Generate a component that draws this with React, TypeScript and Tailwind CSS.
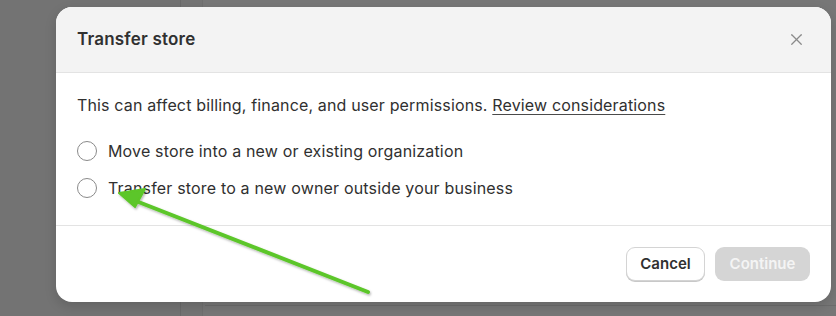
import { X } from 'lucide-react';

const options = [
  'Move store into a new or existing organization',
  'Transfer store to a new owner outside your business',
];

function Radio() {
  return <span className="w-5 h-5 rounded-full border border-[#8a8a8a] bg-white shrink-0" />;
}

export default function App() {
  return (
    <div
      className="relative w-[836px] h-[316px] overflow-hidden bg-[#747474]"
      style={{ fontFamily: 'Inter, "Noto Sans", sans-serif' }}
    >
      {/* dimmed page behind */}
      <div className="absolute inset-0 flex">
        <div className="w-[180px] h-full bg-[#737373]" />
        <div className="w-px h-full bg-[#6a6a6a]" />
        <div className="flex-1 h-full bg-[#777777] border-l border-[#6f6f6f] ml-[21px]" />
      </div>
      <div className="absolute left-[205px] right-0 top-[305px] h-px bg-[#6c6c6c]" />

      {/* modal */}
      <div className="absolute left-[56px] top-[7px] w-[775px] h-[295px] bg-white rounded-[16px] overflow-hidden flex flex-col shadow-[0_4px_12px_rgba(0,0,0,0.15)]">
        <div className="h-[66px] shrink-0 bg-[#f3f3f3] border-b border-[#e3e3e3] flex items-center justify-between pl-[21px] pr-[25px]">
          <h2 className="text-[17px] font-semibold text-[#303030] tracking-[0.2px]">Transfer store</h2>
          <X className="w-[19px] h-[19px] text-[#8a8a8a]" strokeWidth={1.6} />
        </div>

        <div className="flex-1 px-[21px] pt-[21px] border-b border-[#e3e3e3]">
          <p className="text-[16px] leading-[22px] text-[#303030] tracking-[0.15px]">
            This can affect billing, finance, and user permissions.{' '}
            <span className="underline underline-offset-[3px] decoration-[#4a4a4a]">Review considerations</span>
          </p>
          <div className="mt-[24px] flex flex-col gap-[15px]">
            {options.map((label) => (
              <label key={label} className="flex items-center gap-[11px] h-[22px]">
                <Radio />
                <span className="text-[16px] text-[#303030] tracking-[0.17px]">{label}</span>
              </label>
            ))}
          </div>
        </div>

        <div className="h-[76px] shrink-0 flex items-center justify-end gap-[10px] pr-[21px]">
          <button className="h-[34px] w-[79px] rounded-[9px] bg-white border border-[#d4d4d4] shadow-[0_1px_0_#c8c8c8] text-[15px] font-semibold text-[#303030]">
            Cancel
          </button>
          <button className="h-[34px] w-[95px] rounded-[9px] bg-[#d5d5d5] text-[15px] font-semibold text-[#f4f4f4]">
            Continue
          </button>
        </div>
      </div>

      {/* annotation arrow */}
      <svg className="absolute inset-0 pointer-events-none" width="836" height="316" viewBox="0 0 836 316">
        <defs>
          <filter id="sh" x="-10%" y="-10%" width="120%" height="120%">
            <feDropShadow dx="1" dy="1.5" stdDeviation="1.2" floodColor="#000" floodOpacity="0.3" />
          </filter>
        </defs>
        <g filter="url(#sh)" fill="#5cc629" stroke="#5cc629">
          <line x1="368" y1="292" x2="136" y2="201" strokeWidth="4" strokeLinecap="round" />
          <polygon points="119,193 145,189 135,207" strokeWidth="2" strokeLinejoin="round" />
        </g>
      </svg>
    </div>
  );
}
